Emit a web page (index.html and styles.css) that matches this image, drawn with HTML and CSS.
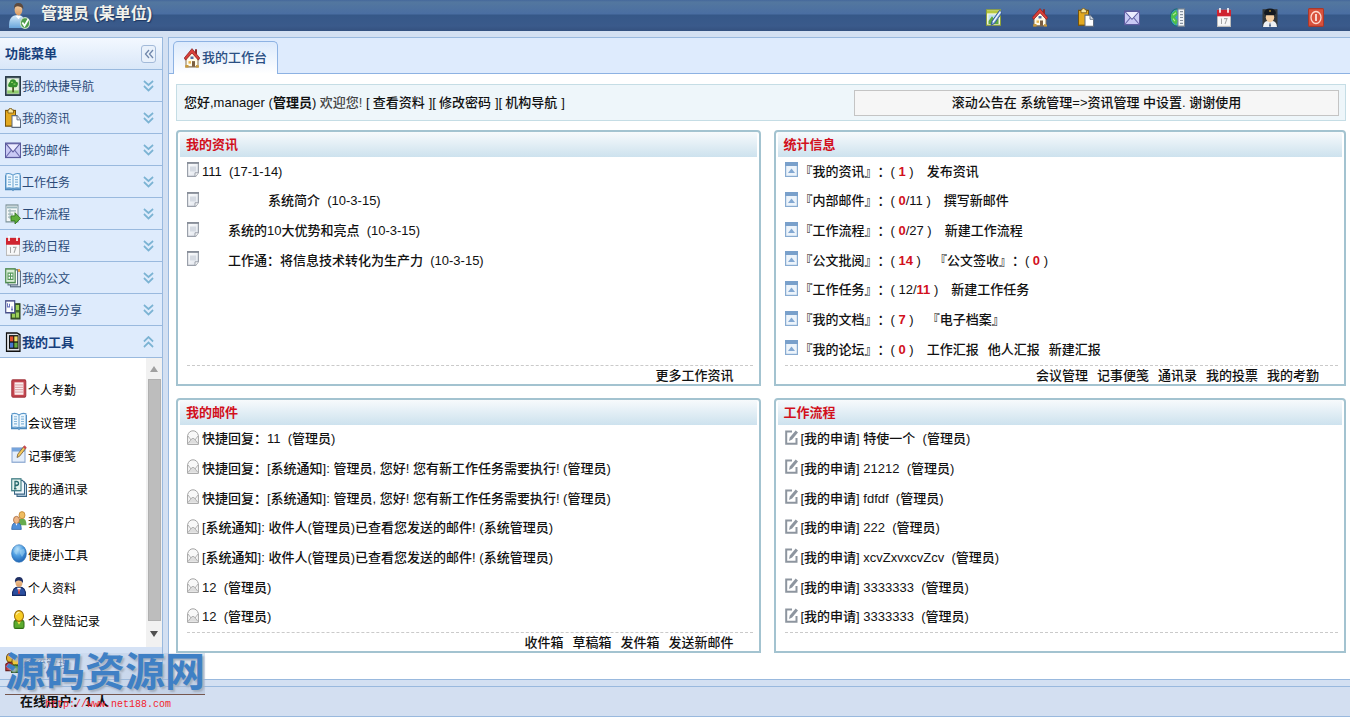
FILE: index.html
```html
<!DOCTYPE html>
<html lang="zh-CN">
<head>
<meta charset="utf-8">
<title>我的工作台</title>
<link rel="stylesheet" href="styles.css">
</head>
<body>
<svg class="sprite" aria-hidden="true">
  <defs>
    <linearGradient id="skin" x1="0" y1="0" x2="0" y2="1"><stop offset="0" stop-color="#f6cfa2"/><stop offset="1" stop-color="#d89a62"/></linearGradient>
    <linearGradient id="shirt" x1="0" y1="0" x2="0" y2="1"><stop offset="0" stop-color="#d8ecfb"/><stop offset="1" stop-color="#6aa6dc"/></linearGradient>
    <radialGradient id="ball" cx=".4" cy=".25" r=".8"><stop offset="0" stop-color="#b9e2fb"/><stop offset=".5" stop-color="#4b9be0"/><stop offset="1" stop-color="#1c5fae"/></radialGradient>
    <linearGradient id="paper" x1="0" y1="0" x2="1" y2="1"><stop offset="0" stop-color="#fff"/><stop offset="1" stop-color="#dfe4ec"/></linearGradient>
  </defs>
  <symbol id="i-user" viewBox="0 0 20 24" preserveAspectRatio="none"><path d="M1 23q-1-12 8-12 7 0 7 12z" fill="url(#shirt)"/><path d="M7 12l2.500 3 2.500-3z" fill="#fff"/><ellipse cx="9.500" cy="6.500" rx="3.500" ry="5" fill="url(#skin)"/><path d="M5.500 5.500Q5 0 9.500 0T14 5.500Q12 3 9 3T5.500 5.500" fill="#5d4a3e"/><ellipse cx="15.500" cy="18.500" rx="4.200" ry="5" fill="#4f9d4b" stroke="#c8dfc6"/><path d="M13 18l2 3 3.500-6" fill="none" stroke="#fff" stroke-width="1.600"/></symbol>
  <symbol id="i-home" viewBox="0 0 16 16" preserveAspectRatio="none"><path d="M11 1h2v4h-2z" fill="#8e2a2a"/><path d="M2 8L8 2.500l6 5.500v7H2z" fill="#fffbe8" stroke="#8a7350"/><path d="M8 .5L15.700 8l-1.300 1.700L8 4 1.600 9.700.3 8z" fill="#d9403a" stroke="#8d1f1f" stroke-width=".7"/><path d="M6.500 6.800h3v2h-3z" fill="#4d6fa8"/><path d="M4.500 10.500h2.500v2H4.500z" fill="#e8b54e"/><path d="M8 10.500h3V15H8z" fill="#7b5e40"/><path d="M1 15.500h3.500v-2H1.500zM12 13.500v2h3v-1.500z" fill="#c99a3a"/></symbol>
  <symbol id="i-clip" viewBox="0 0 16 16" preserveAspectRatio="none"><rect x=".5" y="2" width="10" height="12.500" fill="#e3a920" stroke="#76530b"/><path d="M3 1.500h1L4.500.3h2L7 1.500h1.500v2.500H3z" fill="#f8e6a0" stroke="#76530b" stroke-width=".7"/><path d="M7 6h5l3.500 3.500v6H7z" fill="#fff" stroke="#5d6b80"/><path d="M12 6v3.500h3.500" fill="#dfe6f0" stroke="#5d6b80" stroke-width=".8"/></symbol>
  <symbol id="i-mail" viewBox="0 0 16 16" preserveAspectRatio="none"><rect x=".5" y="2.500" width="15" height="11.500" fill="#c9c9f4" stroke="#5b5a9d"/><path d="M1 13.500L6.500 8M15 13.500L9.500 8" stroke="#6c6bad" fill="none" stroke-width=".9"/><path d="M1 3l7 6.500L15 3z" fill="#ecebff" stroke="#5b5a9d" stroke-width=".9"/></symbol>
  <symbol id="i-book" viewBox="0 0 16 16" preserveAspectRatio="none"><path d="M0 2.500v12h7l1 .8 1-.8h7v-12H15V13H9l-1 1-1-1H1V2.500z" fill="#4b88bd"/><path d="M1 1.500Q5 .5 8 2.500v11Q5 12 1 13zM15 1.500Q11 .5 8 2.500v11q3-1.500 7-.5z" fill="#edf7fe" stroke="#5b98ca" stroke-width=".9"/><path d="M3 4h3M3 6h3M3 8h3M3 10h3M10 4h3M10 6h3M10 8h3M10 10h3" stroke="#86b6da"/></symbol>
  <symbol id="i-edit" viewBox="0 0 16 16" preserveAspectRatio="none"><rect x=".5" y="1.500" width="14" height="13" fill="#f5f5d8" stroke="#8da03a"/><path d="M1 2h13v2.500H1z" fill="#b7c940"/><path d="M2.500 5.500h10v8h-10z" fill="#bfe0ef"/><path d="M2.500 11l3.500-4 3 3 3.500-1v4.500h-10z" fill="#5ea840"/><path d="M5 14.500l1-3.500L13.500 2 16 4l-7.500 9z" fill="#7fa9dc" stroke="#2f528c" stroke-width=".8"/><path d="M7 12l7.500-9" stroke="#fff"/></symbol>
  <symbol id="i-globe" viewBox="0 0 16 16" preserveAspectRatio="none"><ellipse cx="7" cy="8" rx="6.700" ry="7.300" fill="#3e9ad6" stroke="#1f6b74"/><path d="M1.500 5L6 1.500 8 5 5 8l3 3-2 3.500-3.500-3L1 8z" fill="#4cc04a"/><path d="M3 6l3-2M3 9l2 2" stroke="#b6f09a"/><rect x="8" y=".8" width="6.500" height="14.500" fill="#f1f4f7" stroke="#76828f"/><path d="M10 3h3M10 5.500h3M10 8h3M10 10.500h3M10 13h3" stroke="#8793a1"/></symbol>
  <symbol id="i-cal" viewBox="0 0 16 16" preserveAspectRatio="none"><rect x="1.500" y="2" width="13" height="13.500" fill="#f8f8f8" stroke="#bcbcbc"/><path d="M1 1.500h14V7H1z" fill="#cf2430"/><path d="M4 0v4M12 0v4" stroke="#fff" stroke-width="1.600"/><path d="M5.500 9v4.500M5 9.500l.7-.5M8 9h3l-2 4.500" stroke="#a6a6a6" fill="none"/></symbol>
  <symbol id="i-police" viewBox="0 0 16 16" preserveAspectRatio="none"><path d="M.5 16V1h15v15z" fill="#353839"/><path d="M1 16q.5-5 5-5h4q4.500 0 5 5z" fill="#eef0f3"/><ellipse cx="8" cy="7.800" rx="4.200" ry="4.200" fill="#f6cfa2"/><path d="M2 4.500Q2.500 .5 8 .5t6 4L12.500 6h-9z" fill="#15191f"/><path d="M7 2.500h2" stroke="#e3b33b"/><path d="M8 12l1 3.500H7z" fill="#2d466e"/></symbol>
  <symbol id="i-power" viewBox="0 0 16 16" preserveAspectRatio="none"><rect x=".5" y=".5" width="15" height="15" rx="1" fill="#d9513c" stroke="#a9382a"/><circle cx="8" cy="8" r="5" fill="none" stroke="#ffd9ce" stroke-width="1.300"/><path d="M8 5v6" stroke="#fff" stroke-width="1.500"/></symbol>
  <symbol id="i-tree" viewBox="0 0 16 16" preserveAspectRatio="none"><rect x=".7" y=".7" width="14.600" height="14.600" fill="#8a9aa2" stroke="#22333f" stroke-width="1.300"/><rect x="2.200" y="2" width="11.600" height="12" fill="#e6f5da"/><path d="M2.200 11.500h11.600V14H2.200z" fill="#8ecb6c"/><path d="M7.200 8h1.800v5H7.200z" fill="#4c5a25"/><path d="M8 2.500q3 0 3 2 2.500 0 1.800 2.500T10 9H6Q2.500 9 3.200 7T5 4.500q0-2 3-2" fill="#36902e"/><path d="M6 5h2M8.500 6.500h2" stroke="#8ed15d"/></symbol>
  <symbol id="i-flow" viewBox="0 0 16 16" preserveAspectRatio="none"><rect x="1" y=".8" width="12" height="13.500" fill="#f3f7f7" stroke="#7c9298"/><path d="M2 2h10v1.500H2z" fill="#9ab7bd"/><path d="M3 5.500h8M3 8h5M3 10.500h4M5 4v8" stroke="#9fb5b9"/><path d="M6 9.500h4V7l5.500 4.500L10 16v-2.500H6z" fill="#5fae3c" stroke="#33761f" stroke-width=".8"/></symbol>
  <symbol id="i-docs" viewBox="0 0 16 16" preserveAspectRatio="none"><rect x="5.500" y="2.500" width="10" height="12.500" fill="#dbe5ee" stroke="#5d7084"/><path d="M6 .8h9V3H6z" fill="#e9a34a"/><rect x="3" y="1.500" width="9.500" height="12" fill="#fff" stroke="#5d7084"/><rect x=".7" y=".7" width="9.500" height="11" fill="#d8edd5" stroke="#4e8a50" stroke-width="1.200"/><path d="M3 4h5v5H3zM3 6.500h5M5.500 4v5" fill="#fff" stroke="#55985a"/></symbol>
  <symbol id="i-share" viewBox="0 0 16 16" preserveAspectRatio="none"><path d="M7 3h8v12H6V8z" fill="#47702e" stroke="#263d18"/><path d="M11 4h3v4h-3zM11 10h3v4h-3zM7 11h3v3H7z" fill="#9bce58"/><rect x=".7" y=".7" width="9" height="9.500" fill="#fff" stroke="#49508a" stroke-width="1.200"/><path d="M2.500 2.500v3h2V3M6 7.500h2M7 5v4" fill="none" stroke="#6a74c0"/></symbol>
  <symbol id="i-tools" viewBox="0 0 16 16" preserveAspectRatio="none"><path d="M1.500.700h10.500l3 1.500v13.100H1.500z" fill="#dfe2e6" stroke="#111" stroke-width="1.200"/><path d="M4 2.500h9.500v11H4z" fill="#111"/><path d="M5 3.500h3.300v4H5z" fill="#e4502f"/><path d="M9.300 3.500h3.300v4H9.300z" fill="#f3de63"/><path d="M5 8.500h3.300v4H5z" fill="#4977cf"/><path d="M9.300 8.500h3.300v4H9.300z" fill="#68ad3e"/></symbol>
  <symbol id="i-attend" viewBox="0 0 16 16" preserveAspectRatio="none"><rect x=".8" y=".8" width="14" height="14.400" rx="1" fill="#c4454e" stroke="#a3343d"/><rect x="3.500" y="2.800" width="9" height="10.500" fill="#fbeeee"/><path d="M4 5h8M4 7h8M4 9h8M4 11h8" stroke="#d39196" stroke-width=".8"/></symbol>
  <symbol id="i-note" viewBox="0 0 16 16" preserveAspectRatio="none"><rect x="1" y="2.500" width="13" height="12" fill="#e4eefb" stroke="#86a4cf"/><path d="M1 2.500h13v3H1z" fill="#76a4dc"/><path d="M6 10.500l.8-2.800L13 1l2 1.600-6.500 6.900z" fill="#f4c95b" stroke="#6f5532" stroke-width=".7"/><path d="M12 2l1.500-1.700L15.700 2l-1.400 1.600z" fill="#c94952"/></symbol>
  <symbol id="i-contacts" viewBox="0 0 16 16" preserveAspectRatio="none"><path d="M6 3h7l2.500 2.500v10H6z" fill="#c8dcec" stroke="#3b6585"/><path d="M3.500 2h8l2 2v9.500h-10z" fill="#eef6fc" stroke="#3b6585"/><rect x=".7" y=".7" width="9.300" height="10" fill="#e4f3ee" stroke="#3d7b82" stroke-width="1.100"/><path d="M4 9V3h1.500q2 0 2 1.600T5.500 6.200H4M3 9h2.500" fill="none" stroke="#27696d" stroke-width="1.300"/></symbol>
  <symbol id="i-clients" viewBox="0 0 16 16" preserveAspectRatio="none"><path d="M6.500 12q0-6 4.500-6t4.500 6z" fill="#67ab4e"/><circle cx="11" cy="3.500" r="3" fill="#efbd61" stroke="#bd7d2a" stroke-width=".7"/><path d="M.7 15.500q0-6 4.800-6t4.800 6z" fill="#4f8fd9" stroke="#2c62a6" stroke-width=".7"/><circle cx="5.500" cy="7.500" r="3" fill="#efb788" stroke="#a06236" stroke-width=".7"/><path d="M4.500 10.500l1 2 1-2z" fill="#fff"/></symbol>
  <symbol id="i-ball" viewBox="0 0 16 16" preserveAspectRatio="none"><circle cx="8" cy="8" r="7.400" fill="url(#ball)" stroke="#3377bb" stroke-width=".6"/><path d="M3 6q2-3 4-1l-1 4-2-1zM9 5l4-1 1 3-3 4-2-3z" fill="#a9dcf5" opacity=".5"/></symbol>
  <symbol id="i-person" viewBox="0 0 16 16" preserveAspectRatio="none"><path d="M1.500 15.500Q1 8.500 8 8.500t6.500 7z" fill="#2b4f9f" stroke="#152a63"/><path d="M6 9l2 4 2-4z" fill="#fff"/><path d="M7.500 10h1l.5 4H7z" fill="#c33"/><circle cx="8" cy="4.800" r="3.500" fill="url(#skin)"/><path d="M4 5q-1-5 4.500-5Q12.500.5 12 5 10 2.500 7 3T4 5" fill="#1f2f63"/></symbol>
  <symbol id="i-login" viewBox="0 0 16 16" preserveAspectRatio="none"><rect x="3" y="9" width="10" height="6.500" rx="1.500" fill="#5cab2f" stroke="#2e6d12"/><path d="M6 9.500l2 3 2-3z" fill="#f6e04c"/><ellipse cx="8" cy="5" rx="4.500" ry="4.500" fill="#f7cc25" stroke="#9b6c0a"/><path d="M5.500 4Q6 1.500 8.500 2" stroke="#fff6b8" fill="none"/></symbol>
  <symbol id="i-system" viewBox="0 0 16 16" preserveAspectRatio="none"><circle cx="5" cy="4" r="3.500" fill="#e7b629" stroke="#73510a"/><path d="M.8 14V9q4-3 8 0v5z" fill="#c83a37" stroke="#6a1b19"/><circle cx="10.500" cy="6.500" r="3.500" fill="#f2ca35" stroke="#73510a"/><path d="M6.500 15.500V11q4-3 8 0v4.500z" fill="#569c3c" stroke="#28561a"/></symbol>
  <symbol id="i-page" viewBox="0 0 12 15" preserveAspectRatio="none"><path d="M.6.600h10.800v10L8.500 14.400H.6z" fill="url(#paper)" stroke="#9aa0aa" stroke-width="1.200"/><path d="M0 1h12" stroke="#828994" stroke-width="1.600"/><path d="M3 4.500h6v5H3z" fill="#d5dae2"/><path d="M8 14.400v-3.600h3.400" fill="#fff" stroke="#9aa0aa"/></symbol>
  <symbol id="i-stat" viewBox="0 0 13 15" preserveAspectRatio="none"><rect x=".6" y=".6" width="11.800" height="13.800" fill="#edf4fb" stroke="#88abd1" stroke-width="1.200"/><path d="M0 0h13v4H0z" fill="#79a0cb"/><path d="M3 11l3.500-4.500L10 11z" fill="#83a8d2"/></symbol>
  <symbol id="i-open" viewBox="0 0 12 15" preserveAspectRatio="none"><path d="M.6 5.500Q2 .8 6 .8t5.400 4.700v8.900H.6z" fill="#f8f8f8" stroke="#a3a3a3"/><path d="M1 13.500L4.500 9q1.500-1.500 3 0l3.500 4.500z" fill="#ddd"/><path d="M1 6l3 4M11 6l-3 4M1 13.500L4.500 9q1.500-1.500 3 0l3.500 4.500" fill="none" stroke="#a3a3a3" stroke-width=".8"/></symbol>
  <symbol id="i-apply" viewBox="0 0 13 15" preserveAspectRatio="none"><path d="M7 1.500H1.200v12.300h10.300V8" fill="none" stroke="#8d959f" stroke-width="2"/><path d="M4 11l.8-3.500L10.700.4l2.300 2-5.900 7z" fill="#8d959f"/></symbol>
  <symbol id="i-down" viewBox="0 0 12 12" preserveAspectRatio="none"><path d="M1 1l5 4 5-4M1 6l5 4.500L11 6" fill="none" stroke="#7bb3d3" stroke-width="1.800"/></symbol>
  <symbol id="i-up" viewBox="0 0 12 12" preserveAspectRatio="none"><path d="M1 5.500L6 1l5 4.500M1 11l5-4.500L11 11" fill="none" stroke="#7bb3d3" stroke-width="1.800"/></symbol>
</svg>

<header class="topbar">
  <svg class="avatar"><use href="#i-user"/></svg>
  <h1 class="who">管理员 (某单位)</h1>
  <nav class="tools">
    <button aria-label="编辑"><svg><use href="#i-edit"/></svg></button>
    <button aria-label="首页"><svg><use href="#i-home"/></svg></button>
    <button aria-label="资讯"><svg><use href="#i-clip"/></svg></button>
    <button aria-label="邮件"><svg><use href="#i-mail"/></svg></button>
    <button aria-label="通讯录"><svg><use href="#i-globe"/></svg></button>
    <button aria-label="日程"><svg><use href="#i-cal"/></svg></button>
    <button aria-label="个人资料"><svg><use href="#i-police"/></svg></button>
    <button aria-label="退出"><svg><use href="#i-power"/></svg></button>
  </nav>
</header>

<div class="workspace">
  <aside class="sidebar">
    <div class="side-title"><h2>功能菜单</h2><button class="collapse" aria-label="收起"><svg viewBox="0 0 10 10"><path d="M5 1L1.500 5 5 9M9 1L5.500 5 9 9" fill="none" stroke="#7188ab" stroke-width="1.300"/></svg></button></div>
    <button class="group"><svg class="ico"><use href="#i-tree"/></svg><span>我的快捷导航</span><svg class="chev"><use href="#i-down"/></svg></button>
    <button class="group"><svg class="ico"><use href="#i-clip"/></svg><span>我的资讯</span><svg class="chev"><use href="#i-down"/></svg></button>
    <button class="group"><svg class="ico"><use href="#i-mail"/></svg><span>我的邮件</span><svg class="chev"><use href="#i-down"/></svg></button>
    <button class="group"><svg class="ico"><use href="#i-book"/></svg><span>工作任务</span><svg class="chev"><use href="#i-down"/></svg></button>
    <button class="group"><svg class="ico"><use href="#i-flow"/></svg><span>工作流程</span><svg class="chev"><use href="#i-down"/></svg></button>
    <button class="group"><svg class="ico"><use href="#i-cal"/></svg><span>我的日程</span><svg class="chev"><use href="#i-down"/></svg></button>
    <button class="group"><svg class="ico"><use href="#i-docs"/></svg><span>我的公文</span><svg class="chev"><use href="#i-down"/></svg></button>
    <button class="group"><svg class="ico"><use href="#i-share"/></svg><span>沟通与分享</span><svg class="chev"><use href="#i-down"/></svg></button>
    <button class="group open"><svg class="ico"><use href="#i-tools"/></svg><span>我的工具</span><svg class="chev"><use href="#i-up"/></svg></button>
    <div class="drawer">
      <ul class="drawer-list">
        <li><a href="#"><svg class="ico"><use href="#i-attend"/></svg>个人考勤</a></li>
        <li><a href="#"><svg class="ico"><use href="#i-book"/></svg>会议管理</a></li>
        <li><a href="#"><svg class="ico"><use href="#i-note"/></svg>记事便笺</a></li>
        <li><a href="#"><svg class="ico"><use href="#i-contacts"/></svg>我的通讯录</a></li>
        <li><a href="#"><svg class="ico"><use href="#i-clients"/></svg>我的客户</a></li>
        <li><a href="#"><svg class="ico"><use href="#i-ball"/></svg>便捷小工具</a></li>
        <li><a href="#"><svg class="ico"><use href="#i-person"/></svg>个人资料</a></li>
        <li><a href="#"><svg class="ico"><use href="#i-login"/></svg>个人登陆记录</a></li>
      </ul>
      <div class="scroll">
        <button aria-label="向上滚动"><svg viewBox="0 0 8 6"><path d="M0 6l4-6 4 6z" fill="#a0a0a0"/></svg></button>
        <div class="thumb"></div>
        <button aria-label="向下滚动"><svg viewBox="0 0 8 6"><path d="M0 0l4 6 4-6z" fill="#505050"/></svg></button>
      </div>
    </div>
    <button class="group system"><svg class="ico"><use href="#i-system"/></svg><span>系统管理</span><svg class="chev"><use href="#i-down"/></svg></button>
  </aside>

  <main class="main">
    <div class="tabs"><button class="tab"><svg class="ico"><use href="#i-home"/></svg>我的工作台</button></div>
    <div class="content">
      <div class="welcome">
        <p class="hello">您好,manager (<b>管理员</b>) <span class="greet">欢迎您!</span>
          <span class="links">[<a href="#">查看资料</a>][<a href="#">修改密码</a>][<a href="#">机构导航</a>]</span></p>
        <div class="notice">滚动公告在 系统管理=&gt;资讯管理 中设置. 谢谢使用</div>
      </div>
      <div class="panels">
        <section class="panel">
          <h3>我的资讯</h3>
          <ul class="rows">
            <li><svg class="mark"><use href="#i-page"/></svg><a href="#">111 &nbsp;(17-1-14)</a></li>
            <li><svg class="mark"><use href="#i-page"/></svg><a href="#" class="far">系统简介 &nbsp;(10-3-15)</a></li>
            <li><svg class="mark"><use href="#i-page"/></svg><a href="#" class="near">系统的10大优势和亮点 &nbsp;(10-3-15)</a></li>
            <li><svg class="mark"><use href="#i-page"/></svg><a href="#" class="near">工作通：将信息技术转化为生产力 &nbsp;(10-3-15)</a></li>
          </ul>
          <div class="more"><a href="#">更多工作资讯</a></div>
        </section>
        <section class="panel">
          <h3>统计信息</h3>
          <ul class="rows stats">
            <li><svg class="mark"><use href="#i-stat"/></svg><span>『我的资讯』：( <b>1</b> )</span><a href="#">发布资讯</a></li>
            <li><svg class="mark"><use href="#i-stat"/></svg><span>『内部邮件』：( <b>0</b>/11 )</span><a href="#">撰写新邮件</a></li>
            <li><svg class="mark"><use href="#i-stat"/></svg><span>『工作流程』：( <b>0</b>/27 )</span><a href="#">新建工作流程</a></li>
            <li><svg class="mark"><use href="#i-stat"/></svg><span>『公文批阅』：( <b>14</b> )</span><span>『公文签收』：( <b>0</b> )</span></li>
            <li><svg class="mark"><use href="#i-stat"/></svg><span>『工作任务』：( 12/<b>11</b> )</span><a href="#">新建工作任务</a></li>
            <li><svg class="mark"><use href="#i-stat"/></svg><span>『我的文档』：( <b>7</b> )</span><a href="#">『电子档案』</a></li>
            <li><svg class="mark"><use href="#i-stat"/></svg><span>『我的论坛』：( <b>0</b> )</span><span class="trio"><a href="#">工作汇报</a><a href="#">他人汇报</a><a href="#">新建汇报</a></span></li>
          </ul>
          <div class="more"><a href="#">会议管理</a><a href="#">记事便笺</a><a href="#">通讯录</a><a href="#">我的投票</a><a href="#">我的考勤</a></div>
        </section>
        <section class="panel">
          <h3>我的邮件</h3>
          <ul class="rows">
            <li><svg class="mark"><use href="#i-open"/></svg><a href="#">快捷回复：11 &nbsp;(管理员)</a></li>
            <li><svg class="mark"><use href="#i-open"/></svg><a href="#">快捷回复：[系统通知]: 管理员, 您好! 您有新工作任务需要执行! (管理员)</a></li>
            <li><svg class="mark"><use href="#i-open"/></svg><a href="#">快捷回复：[系统通知]: 管理员, 您好! 您有新工作任务需要执行! (管理员)</a></li>
            <li><svg class="mark"><use href="#i-open"/></svg><a href="#">[系统通知]: 收件人(管理员)已查看您发送的邮件! (系统管理员)</a></li>
            <li><svg class="mark"><use href="#i-open"/></svg><a href="#">[系统通知]: 收件人(管理员)已查看您发送的邮件! (系统管理员)</a></li>
            <li><svg class="mark"><use href="#i-open"/></svg><a href="#">12 &nbsp;(管理员)</a></li>
            <li><svg class="mark"><use href="#i-open"/></svg><a href="#">12 &nbsp;(管理员)</a></li>
          </ul>
          <div class="more"><a href="#">收件箱</a><a href="#">草稿箱</a><a href="#">发件箱</a><a href="#">发送新邮件</a></div>
        </section>
        <section class="panel">
          <h3>工作流程</h3>
          <ul class="rows apply">
            <li><svg class="mark"><use href="#i-apply"/></svg><a href="#">[我的申请] 特使一个 &nbsp;(管理员)</a></li>
            <li><svg class="mark"><use href="#i-apply"/></svg><a href="#">[我的申请] 21212 &nbsp;(管理员)</a></li>
            <li><svg class="mark"><use href="#i-apply"/></svg><a href="#">[我的申请] fdfdf &nbsp;(管理员)</a></li>
            <li><svg class="mark"><use href="#i-apply"/></svg><a href="#">[我的申请] 222 &nbsp;(管理员)</a></li>
            <li><svg class="mark"><use href="#i-apply"/></svg><a href="#">[我的申请] xcvZxvxcvZcv &nbsp;(管理员)</a></li>
            <li><svg class="mark"><use href="#i-apply"/></svg><a href="#">[我的申请] 3333333 &nbsp;(管理员)</a></li>
            <li><svg class="mark"><use href="#i-apply"/></svg><a href="#">[我的申请] 3333333 &nbsp;(管理员)</a></li>
          </ul>
          <div class="more"></div>
        </section>
      </div>
    </div>
  </main>
</div>

<footer class="status">在线用户：1 人</footer>
<div class="brand"><strong>源码资源网</strong><span>http://www.net188.com</span></div>
</body>
</html>
```
FILE: styles.css
```css
* { box-sizing: border-box; }

body {
  margin: 0;
  min-height: 100vh;
  display: flex;
  flex-direction: column;
  position: relative;
  background: #d3e0f2;
  color: #111;
  font: 13px/20px "Liberation Sans", "Noto Sans CJK SC", sans-serif;
  text-spacing-trim: space-all;
}

h1, h2, h3, p, ul { margin: 0; padding: 0; }
ul { list-style: none; }
a { color: inherit; text-decoration: none; white-space: nowrap; }
button { margin: 0; padding: 0; border: 0; background: none; color: inherit; font: inherit; cursor: pointer; }
svg { display: block; flex: none; }
.sprite { position: absolute; width: 0; height: 0; }
.ico { width: 16px; height: 20px; }

/* header */
.topbar {
  height: 31px;
  display: flex;
  align-items: center;
  padding: 0 26px 0 8px;
  background: linear-gradient(#45689b 0, #53779f 2px, #4a6ea2 14px, #365888 15px, #3a5a8b 26px, #34517f 31px);
}
.avatar { width: 22px; height: 26px; }
.who {
  flex: 1;
  padding: 0 0 4px 11px;
  color: #f2f2ec;
  font-size: 16px;
  line-height: 24px;
  font-weight: bold;
  text-shadow: 1px 1px 1px #1d3660;
}
.tools { display: flex; gap: 30px; padding-top: 3px; }
.tools svg { width: 16px; height: 19px; }

.workspace { flex: 1; display: flex; gap: 5px; padding-top: 6px; }

/* sidebar */
.sidebar {
  width: 163px;
  flex: none;
  display: flex;
  flex-direction: column;
  border: solid #99b9de;
  border-width: 1px 1px 0 0;
  background: #fff;
}
.side-title {
  height: 32px;
  display: flex;
  align-items: center;
  justify-content: space-between;
  padding: 0 6px 0 5px;
  border-bottom: 1px solid #99b9de;
  background: linear-gradient(#f3f8ff, #d9e7f8);
}
.side-title h2 { color: #173f7c; font-size: 13px; }
.collapse {
  width: 15px;
  height: 18px;
  display: grid;
  place-items: center;
  border: 1px solid #a3bad9;
  border-radius: 3px;
  background: #e9f1fb;
}
.collapse svg { width: 10px; height: 12px; }
.group {
  height: 32px;
  display: flex;
  align-items: center;
  gap: 1px;
  padding: 0 8px 0 5px;
  border-bottom: 1px solid #99b9de;
  background: #deebfc;
  color: #2a4a78;
  font-size: 12px;
  text-align: left;
}
.group span { flex: 1; padding-top: 2px; }
.chev { width: 11px; height: 12px; }
.open { color: #173f7c; font-size: 13px; font-weight: bold; }
.system { height: 33px; background: #d5e2f5; color: #6484a8; }
.system .chev { opacity: 0; }
.drawer { flex: 1; display: flex; }
.drawer-list { flex: 1; padding: 16px 0 8px 11px; color: #000; font-size: 12px; }
.drawer-list a { height: 33px; display: flex; align-items: center; gap: 1px; }
.drawer-list .ico { height: 19px; margin-bottom: 5px; }
.scroll {
  width: 16px;
  display: flex;
  flex-direction: column;
  align-items: center;
  background: #f1f1f1;
}
.scroll button { width: 16px; height: 21px; display: grid; place-items: center; }
.scroll button:last-child { height: 26px; }
.scroll svg { width: 8px; height: 6px; }
.thumb { flex: 1; width: 13px; background: #bdbdbd; border: 1px solid #b0b0b0; }

/* tabs */
.main {
  flex: 1;
  min-width: 0;
  display: flex;
  flex-direction: column;
  border: solid #99b9de;
  border-width: 1px 0 0 1px;
  background: #fff;
}
.tabs {
  height: 36px;
  display: flex;
  align-items: flex-end;
  padding: 0 4px;
  border-bottom: 1px solid #8db2e3;
  background: #deebfd;
}
.tab {
  height: 33px;
  margin-bottom: -1px;
  display: flex;
  align-items: center;
  gap: 2px;
  padding: 0 10px;
  border: 1px solid #8db2e3;
  border-bottom: 0;
  border-radius: 5px 5px 0 0;
  background: linear-gradient(#dceafc, #fff);
  color: #2a4f83;
  font-weight: 500;
}

/* content */
.content { flex: 1; display: flex; flex-direction: column; padding: 10px 4px 27px 7px; }
.welcome {
  height: 37px;
  display: flex;
  align-items: center;
  justify-content: space-between;
  padding: 0 6px 0 7px;
  border: 1px solid #c5dde5;
  background: #eef6fa;
}
.hello { white-space: nowrap; }
.greet { color: #444; }
.links a { padding: 0 4px 0 3px; }
.hello, .notice { font-weight: 500; }
.notice {
  width: 485px;
  height: 26px;
  line-height: 24px;
  border: 1px solid #c4c4c4;
  background: #f6f6f6;
  text-align: center;
  white-space: nowrap;
}
.panels {
  flex: 1;
  display: grid;
  grid-template-columns: 584fr 572fr;
  grid-template-rows: 1fr 1fr;
  gap: 12px 13px;
  padding-top: 9px;
}
.panel {
  display: flex;
  flex-direction: column;
  padding: 0 2px;
  border: 2px solid #a3c3d0;
  border-radius: 4px 4px 0 0;
  background: #fff;
}
.panel h3 {
  height: 25px;
  padding: 0 6px;
  background: linear-gradient(#f7fafc, #cde2ee);
  color: #d2101c;
  font-size: 13px;
  line-height: 26px;
}
.rows {
  flex: 1;
  display: grid;
  grid-template-rows: repeat(7, 1fr);
  margin: 0 4px 0 7px;
  border-bottom: 1px dashed #cacaca;
}
.rows li { display: flex; align-items: center; gap: 3px; font-weight: 500; white-space: nowrap; }
.mark { width: 12px; height: 15px; margin-bottom: 4px; }
.near { padding-left: 26px; }
.far { padding-left: 66px; }
.stats li { gap: 13px; }
.stats .mark { width: 13px; margin-right: -11px; }
.stats b { color: #d2101c; }
.apply .mark { width: 13px; }
.trio { display: flex; gap: 9px; }
.more {
  height: 18px;
  display: flex;
  justify-content: flex-end;
  gap: 9px;
  padding-right: 23px;
  line-height: 20px;
  font-weight: 500;
}

/* footer */
.status {
  height: 38px;
  margin-top: -1px;
  padding: 7px 20px 0;
  border-top: 1px solid #99b9de;
  border-bottom: 1px solid #99b9de;
  background: linear-gradient(#d3e0f2 6px, #99b9de 6px, #99b9de 7px, #d3dff1 7px);
  line-height: 30px;
  font-weight: bold;
}
.brand {
  position: absolute;
  left: 5px;
  bottom: 5px;
  width: 200px;
  display: flex;
  flex-direction: column;
  white-space: nowrap;
}
.brand strong {
  height: 42px;
  border-bottom: 1px solid #75564e;
  background: linear-gradient(to right, #a8b9d300, #a8b9d366);
  color: #3f80c5;
  font-size: 40px;
  line-height: 38px;
  text-shadow: 2px 2px 2px #a3afc0;
}
.brand span {
  height: 17px;
  padding-left: 40px;
  color: #f2232c;
  font: 10px/19px "Liberation Mono", monospace;
}
```
